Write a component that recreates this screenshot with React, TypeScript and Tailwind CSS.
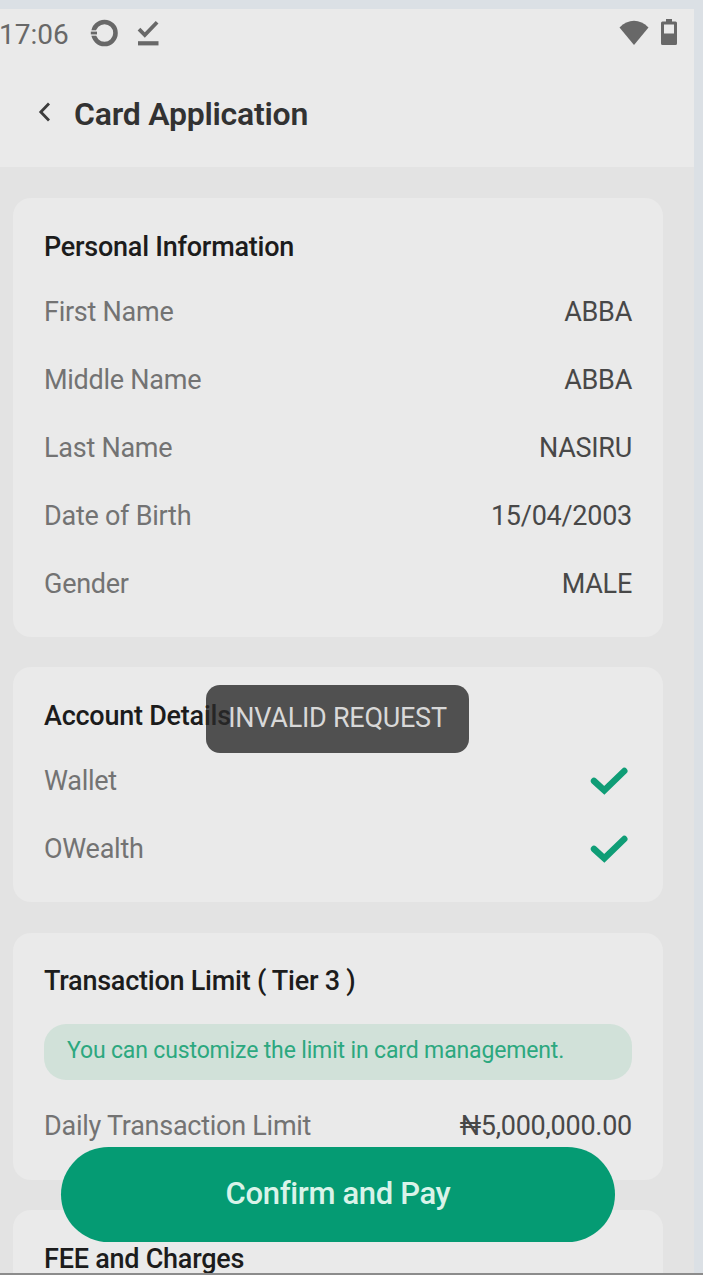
import type { ReactNode } from "react";

type RowProps = {
  label: string;
  children: ReactNode;
};

const personalInfo = [
  { label: "First Name", value: "ABBA" },
  { label: "Middle Name", value: "ABBA" },
  { label: "Last Name", value: "NASIRU" },
  { label: "Date of Birth", value: "15/04/2003" },
  { label: "Gender", value: "MALE" },
];

function StatusBar() {
  return (
    <div className="flex h-12 items-center text-[#686868]">
      <span className="-ml-px pt-[3px] text-[28px] leading-none">17:06</span>
      <svg className="ml-[21px] h-7 w-7" viewBox="0 0 28 28" fill="none">
        <circle cx="14.5" cy="14" r="11" stroke="currentColor" strokeWidth="4.6" />
        <path d="M0 14H7" stroke="#eaeaea" strokeWidth="5.4" />
        <path d="M0.8 14H7" stroke="currentColor" strokeWidth="2.8" />
      </svg>
      <svg className="ml-[18px] h-7 w-6" viewBox="0 0 24 28" fill="none" stroke="currentColor">
        <path d="M3 10.2L8.8 16L21.1 3.2" strokeWidth="3.8" />
        <path d="M2 24.3H22.5" strokeWidth="4.2" />
      </svg>
      <svg className="mr-[11px] ml-auto h-7 w-[30px]" viewBox="0 0 30 28" fill="currentColor">
        <path d="M0.5 8.5C9 -0.4 21 -0.4 29.5 8.5L15 26Z" />
      </svg>
      <svg className="mr-4 h-7 w-[18px]" viewBox="0 0 18 28" fill="currentColor">
        <path fillRule="evenodd" d="M6 0H12V2.5H15.5Q17 2.5 17 4V24.5Q17 26 15.5 26H2.5Q1 26 1 24.5V4Q1 2.5 2.5 2.5H6ZM4 5.5V14.5H14V5.5Z" />
      </svg>
    </div>
  );
}

function Card({ title, children }: { title: string; children?: ReactNode }) {
  return (
    <section className="shrink-0 rounded-[18px] bg-[#eaeaea] px-[31px] pt-[17px] pb-5">
      <h2 className="flex h-[62px] items-center pt-0.5 text-[27px] font-medium tracking-[-0.24px] text-[#1c1c1c]">{title}</h2>
      {children}
    </section>
  );
}

function Row({ label, children }: RowProps) {
  return (
    <div className="flex h-[68px] items-center justify-between pt-0.5 text-[27px] tracking-[-0.26px]">
      <span className="text-[#737373]">{label}</span>
      <span className="text-[#484848]">{children}</span>
    </div>
  );
}

function Check() {
  return (
    <svg className="mr-1 h-7 w-[38px]" viewBox="0 0 38 28" fill="none">
      <path d="M4 14L14.3 23.3L34.3 4" stroke="#0f9d76" strokeWidth="6.4" strokeLinecap="round" />
    </svg>
  );
}

function App() {
  return (
    <div
      className="relative h-[1280px] w-[703px] overflow-hidden bg-white"
      style={{ fontFamily: "Roboto, sans-serif" }}
    >
      <div className="flex h-[1275px] flex-col overflow-hidden border-b-2 border-[#8c8c8c] bg-[#dbe0e5] pt-[9px] pr-[9px]">
        <header className="h-[158px] shrink-0 bg-[#eaeaea]">
          <StatusBar />
          <div className="flex h-[110px] items-center pl-[37px]">
            <svg className="h-6 w-[14px]" viewBox="0 0 14 24" fill="none">
              <path d="M12 3.5L3.8 12L12 20.5" stroke="#3c3c3c" strokeWidth="2.8" />
            </svg>
            <h1 className="ml-[23px] pt-1 text-[32px] font-semibold tracking-[-0.23px] text-[#323232]">Card Application</h1>
          </div>
        </header>

        <main className="flex min-h-0 flex-1 flex-col gap-[30.25px] bg-[#e3e3e3] pt-[31px] pr-[31px] pl-[13px]">
          <Card title="Personal Information">
            {personalInfo.map((item) => (
              <Row key={item.label} label={item.label}>{item.value}</Row>
            ))}
          </Card>

          <Card title="Account Details">
            <Row label="Wallet"><Check /></Row>
            <Row label="OWealth"><Check /></Row>
          </Card>

          <Card title="Transaction Limit ( Tier 3 )">
            <div className="mt-3 mb-3 flex h-14 items-center rounded-[22px] bg-[#d1e1d9] px-[23px] text-[23px] tracking-[-0.15px] text-[#2ca87f]">
              You can customize the limit in card management.
            </div>
            <Row label="Daily Transaction Limit">₦5,000,000.00</Row>
          </Card>

          <Card title="FEE and Charges" />
        </main>
      </div>

      {/* Toast */}
      <div className="absolute top-[685px] left-[206px] flex h-[68px] w-[263px] items-center justify-center rounded-[14px] bg-[#292929]/80 pb-px text-[27px] tracking-[-0.25px] text-[#d8d8d8]">
        INVALID REQUEST
      </div>

      {/* Bottom action */}
      <button className="absolute top-[1147px] left-[61px] h-[95px] w-[554px] rounded-full bg-[#059b73] text-[31px] font-medium tracking-[-0.35px] text-[#d9f3e9]">
        Confirm and Pay
      </button>
    </div>
  );
}

export default App;
